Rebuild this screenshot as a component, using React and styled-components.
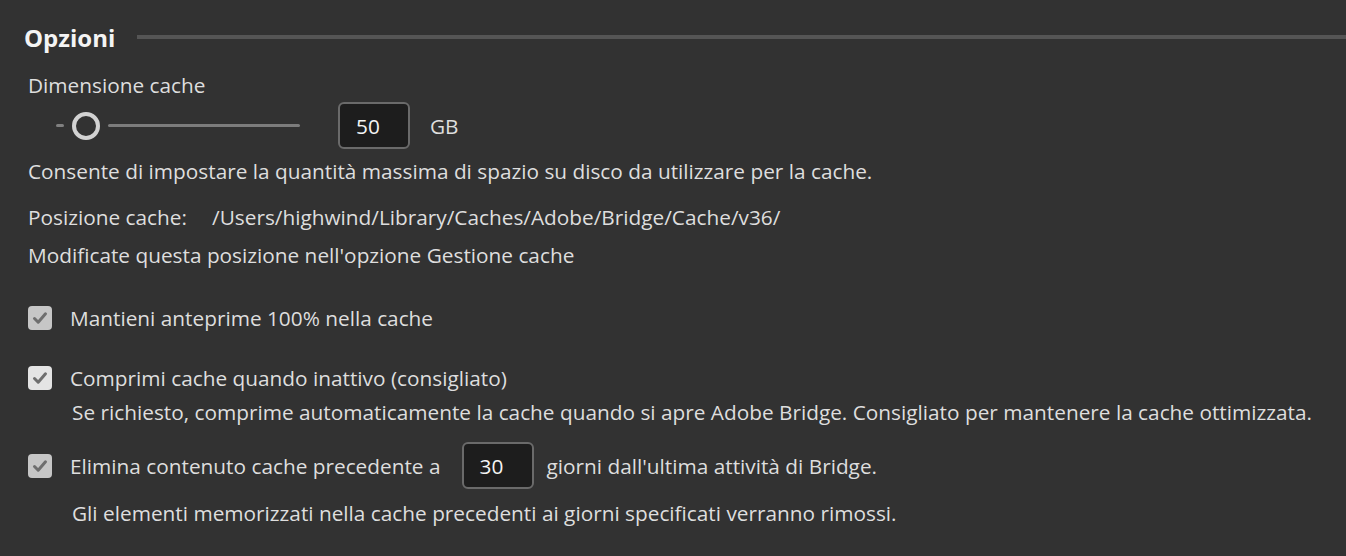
import React from 'react';
import styled, { createGlobalStyle } from 'styled-components';

const GlobalStyle = createGlobalStyle`
  html, body {
    margin: 0;
    padding: 0;
    background: #323232;
  }
  body {
    font-family: 'Open Sans', Lato, sans-serif;
    color: #dedede;
    -webkit-font-smoothing: antialiased;
  }
`;

const Page = styled.div`
  width: 1346px;
  height: 556px;
  box-sizing: border-box;
  padding: 14px 0 0 28px;
  display: flex;
  flex-direction: column;
  overflow: hidden;
`;

const Header = styled.div`
  display: flex;
  align-items: center;
  height: 46px;
  margin-left: -4px;
`;

const Title = styled.h2`
  margin: 0;
  font-size: 24px;
  font-weight: 700;
  color: #f4f4f4;
`;

const Rule = styled.div`
  flex: 1;
  height: 4px;
  margin-left: 22px;
  background: #555555;
`;

const Line = styled.div`
  font-size: 20.8px;
  line-height: 24px;
  margin-top: ${(p) => p.$mt || 0}px;
  padding-left: ${(p) => p.$indent || 0}px;
  white-space: nowrap;
`;

const Row = styled.div`
  display: flex;
  align-items: center;
  height: ${(p) => p.$h || 24}px;
  margin-top: ${(p) => p.$mt || 0}px;
  font-size: 20.8px;
  white-space: nowrap;
`;

const Slider = styled.div`
  display: flex;
  align-items: center;
  gap: 8px;
  width: 244px;
  margin-left: 28px;
`;

const Dash = styled.div`
  width: 8px;
  height: 3px;
  border-radius: 2px;
  background: #808080;
`;

const Thumb = styled.div`
  width: 28px;
  height: 28px;
  box-sizing: border-box;
  border-radius: 50%;
  border: 4px solid #d2d2d2;
`;

const Track = styled.div`
  flex: 1;
  height: 3px;
  border-radius: 2px;
  background: #7c7c7c;
`;

const NumberBox = styled.div`
  width: 72px;
  height: 47px;
  box-sizing: border-box;
  display: flex;
  align-items: center;
  padding-left: 16px;
  border: 2px solid #6a6a6a;
  border-radius: 6px;
  background: #1d1d1d;
  color: #f4f4f4;
  font-size: 20.8px;
  margin: 0 ${(p) => p.$right || 0}px 0 ${(p) => p.$left || 0}px;
`;

const PathLabel = styled.span`
  display: inline-block;
  width: 184px;
`;

const Box = styled.div`
  width: 24px;
  height: 24px;
  border-radius: 4px;
  background: ${(p) => (p.$bright ? '#e4e4e4' : '#c6c6c6')};
  display: flex;
  align-items: center;
  justify-content: center;
  margin-right: 18px;
  flex-shrink: 0;
`;

const Check = ({ bright }) => (
  <Box $bright={bright}>
    <svg width="24" height="24" viewBox="0 0 24 24">
      <path
        d="M6.5 12.5 L10.2 16.2 L17.5 7.8"
        fill="none"
        stroke="#6e6e6e"
        strokeWidth="3"
        strokeLinecap="round"
        strokeLinejoin="round"
      />
    </svg>
  </Box>
);

export default function App() {
  return (
    <>
      <GlobalStyle />
      <Page>
        <Header>
          <Title>Opzioni</Title>
          <Rule />
        </Header>

        <Line $mt={13}>Dimensione cache</Line>
        <Row $h={47} $mt={5}>
          <Slider>
            <Dash />
            <Thumb />
            <Track />
          </Slider>
          <NumberBox $left={38} $right={20}>50</NumberBox>
          GB
        </Row>

        <Line $mt={10}>
          Consente di impostare la quantità massima di spazio su disco da utilizzare per la cache.
        </Line>
        <Line $mt={22}>
          <PathLabel>Posizione cache:</PathLabel>
          /Users/highwind/Library/Caches/Adobe/Bridge/Cache/v36/
        </Line>
        <Line $mt={14}>Modificate questa posizione nell'opzione Gestione cache</Line>

        <Row $mt={39}>
          <Check />
          Mantieni anteprime 100% nella cache
        </Row>

        <Row $mt={36}>
          <Check bright />
          Comprimi cache quando inattivo (consigliato)
        </Row>
        <Line $mt={10} $indent={44}>
          Se richiesto, comprime automaticamente la cache quando si apre Adobe Bridge. Consigliato per mantenere la cache ottimizzata.
        </Line>

        <Row $h={47} $mt={18}>
          <Check />
          Elimina contenuto cache precedente a
          <NumberBox $left={21} $right={13}>30</NumberBox>
          giorni dall'ultima attività di Bridge.
        </Row>
        <Line $mt={12} $indent={44}>
          Gli elementi memorizzati nella cache precedenti ai giorni specificati verranno rimossi.
        </Line>
      </Page>
    </>
  );
}
